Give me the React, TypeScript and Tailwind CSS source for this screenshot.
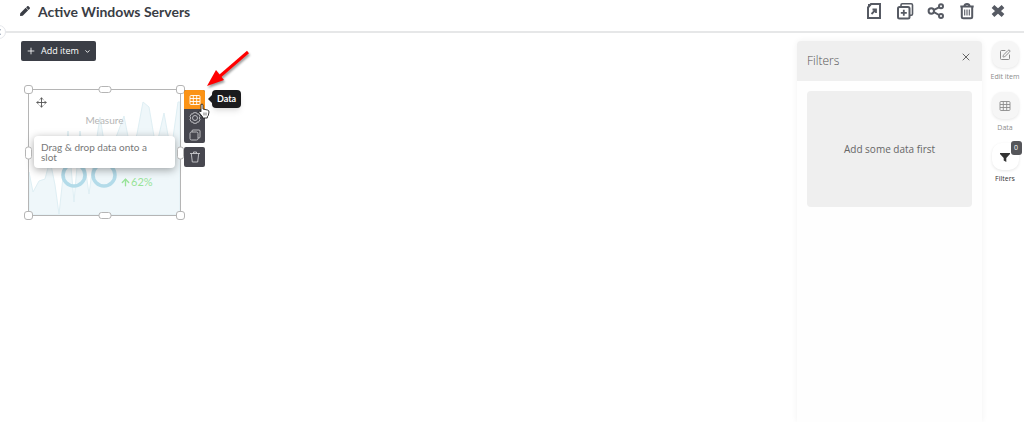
import type { ReactNode } from "react";
import { ArrowUp, ChevronDown, Move, Plus, SquarePen, X } from "lucide-react";
import { FaPen } from "react-icons/fa";
import { clsx } from "clsx";

const headerActions = [
  {
    label: "Export",
    icon: (
      <>
        <path d="M3 5.500 6 2h9v14H3z" />
        <path d="M3 6V2h4z" fill="currentColor" stroke="none" />
        <path d="m6.500 12 4.500-4.500M7.500 7.500H11V11" strokeWidth="1.800" />
      </>
    ),
  },
  {
    label: "Duplicate",
    icon: (
      <>
        <rect x="2" y="5" width="11.500" height="11.500" rx="1.500" />
        <path d="M5 4.500V3q0-1.200 1.200-1.200h9q1.300 0 1.300 1.300v9q0 1.200-1.200 1.200H14" strokeWidth="1.600" />
        <path d="M7.800 7.800v6M4.800 10.800h6" strokeWidth="1.800" />
      </>
    ),
  },
  {
    label: "Share",
    icon: (
      <>
        <circle cx="4.300" cy="9" r="2.700" />
        <circle cx="14" cy="4.200" r="2" />
        <circle cx="14" cy="14" r="2" />
        <path d="m7 7.800 5-2.500M7 10.200l5 2.800" />
      </>
    ),
  },
  {
    label: "Delete",
    icon: (
      <>
        <path d="M2.300 4.500h13.400M6.300 4.200q.4-2.200 2.700-2.200t2.700 2.200M3.800 5v9.800q0 1.500 1.500 1.500h7.400q1.500 0 1.500-1.500V5" />
        <path d="M6.700 7.500v6M9 7.500v6M11.300 7.500v6" strokeWidth="1.100" />
      </>
    ),
  },
  {
    label: "Close",
    icon: <path d="m4 4.500 10 9M14 4.500l-10 9" strokeWidth="4" />,
  },
];

function Header() {
  return (
    <header className="relative flex h-[33px] items-start justify-between border-b-2 border-[#e6e7e8] pr-[17px] pl-5">
      <div className="flex h-[22px] items-center gap-2 text-[#3a3d45]">
        <FaPen className="size-[10px]" />
        <h1 className="text-[14px] font-bold">Active Windows Servers</h1>
      </div>
      <div className="flex h-[22px] items-center gap-[13px] text-[#565a63]">
        {headerActions.map(({ label, icon }) => (
          <button key={label} aria-label={label}>
            <svg viewBox="0 0 18 18" className="size-[18px]" fill="none" stroke="currentColor" strokeWidth="2">
              {icon}
            </svg>
          </button>
        ))}
      </div>
      <button
        aria-label="Expand menu"
        className="absolute top-[25px] -left-2 flex size-[14px] items-center justify-end rounded-full border border-gray-200 bg-white pr-1 text-slate-500"
      >
        <svg viewBox="0 0 3 6" className="h-[6px] w-[3px]" fill="none" stroke="currentColor">
          <path d="M2.500.5.5 3l2 2.500" />
        </svg>
      </button>
    </header>
  );
}

const handles = [
  "-top-[5px] -left-[5px] size-[9px]",
  "-top-[4px] left-1/2 h-[7px] w-[13px] -translate-x-1/2",
  "-top-[5px] -right-[5px] size-[9px]",
  "top-1/2 -left-[4px] h-[13px] w-[7px] -translate-y-1/2",
  "top-1/2 -right-[4px] h-[13px] w-[7px] -translate-y-1/2",
  "-bottom-[5px] -left-[5px] size-[9px]",
  "-bottom-[4px] left-1/2 h-[7px] w-[13px] -translate-x-1/2",
  "-right-[5px] -bottom-[5px] size-[9px]",
];

function Widget() {
  return (
    <div className="relative h-[127px] w-[153px] border border-[#b5b5b5]">
      <svg viewBox="0 0 151 125" className="absolute inset-0 size-full" preserveAspectRatio="none">
        <path
          d="M0 125V82L4 102 10 91 16 89 21 70 26 95 30 124 39 41 45 112 51 41 60 104 66 60 71 27 78 70 86 50 95 26 102 62 108 44 114 12 120 17 127 58 135 23 142 62 149 12 151 12V125z"
          fill="#eff7fa"
          stroke="#dfeff4"
        />
        {/* sample value, sits mostly under the hint */}
        <g fill="none" stroke="#b3dbe9" strokeWidth="3.500">
          <circle cx="45" cy="85" r="11" />
          <circle cx="75" cy="85" r="11" />
        </g>
      </svg>
      <Move className="absolute top-[7px] left-[7px] size-[11px] text-[#555]" />
      <div className="absolute inset-x-0 top-[23px] text-center text-[10px] leading-[14px] text-[#b5b5b5]">Measure</div>
      <div className="absolute top-[85px] left-[91px] flex items-center text-[11px] leading-[14px] text-[#98e398]">
        <ArrowUp className="size-[11px]" strokeWidth={3} />
        62%
      </div>
      <div className="absolute top-[46px] left-[5px] w-[141px] rounded bg-white py-[6px] pr-5 pl-[7px] text-[10px] leading-[10px] text-[#777] shadow-[0_2px_8px_rgba(0,0,0,0.35)]">
        Drag &amp; drop data onto a slot
      </div>
      {handles.map((place) => (
        <span key={place} className={clsx("absolute rounded-[3px] border border-[#b5b5b5] bg-white", place)} />
      ))}
    </div>
  );
}

function ToolIcon({ children }: { children: ReactNode }) {
  return (
    <svg viewBox="0 0 12 12" className="size-3" fill="none" stroke="currentColor" strokeWidth="0.9">
      {children}
    </svg>
  );
}

function GridLines() {
  return (
    <>
      <rect x="1" y="1.500" width="10" height="9" rx="1" />
      <path d="M1 4.500h10M1 7.500h10M4.300 1.500v9M7.700 1.500v9" />
    </>
  );
}

function Toolbar() {
  return (
    <div className="relative flex w-[21px] flex-col gap-1 text-[#c9c9cd]">
      <div className="flex flex-col overflow-hidden rounded-[2px] bg-[#47474f]">
        <button aria-label="Data" className="flex h-[19px] items-center justify-center bg-[#fb9316] text-white">
          <ToolIcon>
            <GridLines />
          </ToolIcon>
        </button>
        <button aria-label="Settings" className="flex h-[17px] items-center justify-center">
          <ToolIcon>
            <circle cx="6" cy="6" r="2.500" />
            <path d="M4.500.7h3l.6 1.300 1.400-.2L11 4.400 10.200 6l.8 1.600-1.500 2.600-1.400-.2-.6 1.300h-3L3.900 10l-1.400.2L1 7.600 1.800 6 1 4.400l1.500-2.600 1.400.2z" />
          </ToolIcon>
        </button>
        <button aria-label="Duplicate" className="flex h-[17px] items-center justify-center">
          <ToolIcon>
            <rect x="1" y="3" width="8" height="8" rx="1.500" />
            <path d="M3 3V2q0-1 1-1h6q1 0 1 1v6q0 1-1 1H9" />
          </ToolIcon>
        </button>
      </div>
      <button aria-label="Delete" className="flex h-[20px] items-center justify-center rounded-[2px] bg-[#47474f]">
        <ToolIcon>
          <path d="M1 2.500h10M4.500 2.500V1h3v1.500M2.300 2.500l1 8.500h5.400l1-8.500" />
        </ToolIcon>
      </button>
      <div
        role="tooltip"
        className="absolute top-0 left-[28px] rounded bg-[#1b1b1d] px-[5px] py-[2px] text-[9px] leading-[14px] font-bold text-white shadow-md"
      >
        <svg viewBox="0 0 4 8" className="absolute top-[5px] -left-[4px] h-2 w-1">
          <path d="M4 0v8L0 4z" fill="#1b1b1d" />
        </svg>
        Data
      </div>
      <svg viewBox="0 0 12 16" className="absolute top-[13px] left-[14px] h-4 w-3" aria-hidden="true">
        <path
          d="M3 1.500q1.200-1 2 .2V6l4.500 1q1.500.3 1.500 2l-.7 3.500-1 1.300V15H4.500v-1.200L1 9.500Q.4 8 2 8l1 .8z"
          fill="#fff"
          stroke="#222"
          strokeWidth="0.900"
        />
        <path d="M6 9.500v3M8 9.500v3" stroke="#222" strokeWidth="0.600" />
      </svg>
      <svg
        viewBox="0 0 48 42"
        className="absolute -top-[41px] left-[20px] h-[42px] w-12 drop-shadow-[1px_2px_1px_rgba(0,0,0,0.4)]"
        aria-hidden="true"
      >
        <path d="M44 3 15 28" stroke="#f00" strokeWidth="3" />
        <path d="m3 37 9-16 8 10z" fill="#f00" />
      </svg>
    </div>
  );
}

function FiltersPanel() {
  return (
    <aside className="w-[185px] rounded-t bg-[#fefefe] font-['Open_Sans',sans-serif] shadow-[0_0_6px_rgba(0,0,0,0.06)]">
      <div className="flex h-10 items-center justify-between rounded-t bg-[#efefef] px-[10px]">
        <h2 className="text-[12px] font-light text-[#555]">Filters</h2>
        <button aria-label="Close filters" className="mb-2">
          <X className="size-3 text-[#666]" strokeWidth={2} />
        </button>
      </div>
      <div className="p-[10px]">
        <div className="flex h-[116px] items-center justify-center rounded bg-[#efefef] text-[10px] text-[#666]">
          Add some data first
        </div>
      </div>
    </aside>
  );
}

const railItems = [
  { label: "Edit item", icon: <SquarePen className="size-3" strokeWidth={2} /> },
  {
    label: "Data",
    icon: (
      <ToolIcon>
        <GridLines />
      </ToolIcon>
    ),
  },
  {
    label: "Filters",
    count: 0,
    icon: (
      <svg viewBox="0 0 12 12" className="size-3">
        <path d="M1 2h10v1L7.300 7v4L4.700 9.500V7L1 3z" fill="currentColor" />
      </svg>
    ),
  },
];

function Rail() {
  return (
    <nav className="flex w-[38px] flex-col gap-2 font-['Open_Sans',sans-serif]">
      {railItems.map(({ label, icon, count }) => {
        const active = count !== undefined;
        return (
          <button
            key={label}
            className={clsx("flex flex-col items-center gap-px", active ? "text-[#333]" : "text-[#8c8c8c]")}
          >
            <span
              className={clsx(
                "relative flex size-[27px] items-center justify-center rounded-[10px] shadow-[0_1px_3px_rgba(0,0,0,0.1)]",
                active ? "bg-white" : "bg-[#f6f6f6]"
              )}
            >
              {icon}
              {active && (
                <span className="absolute -top-[2px] -right-[3px] flex h-[14px] w-[11px] items-center justify-center rounded-[3px] bg-[#55565a] text-[7px] text-white">
                  {count}
                </span>
              )}
            </span>
            <span className="text-[7px] leading-[15px] whitespace-nowrap">{label}</span>
          </button>
        );
      })}
    </nav>
  );
}

export default function App() {
  return (
    <div className="flex min-h-screen flex-col overflow-hidden bg-white font-[Lato,sans-serif]">
      <Header />
      <div className="flex flex-1 gap-1 pt-2">
        <main className="flex flex-1 flex-col items-start gap-7 pl-[21px]">
          <button className="flex h-[20px] items-center gap-[5px] rounded-[2px] bg-[#3b3e46] px-[5px] font-['Open_Sans',sans-serif] text-[9px] font-medium text-white">
            <Plus className="size-[10px]" />
            Add item
            <ChevronDown className="size-[7px]" strokeWidth={3} />
          </button>
          <div className="flex items-start gap-[3px] pl-[7px]">
            <Widget />
            <div className="pt-px">
              <Toolbar />
            </div>
          </div>
        </main>
        <FiltersPanel />
        <Rail />
      </div>
    </div>
  );
}
